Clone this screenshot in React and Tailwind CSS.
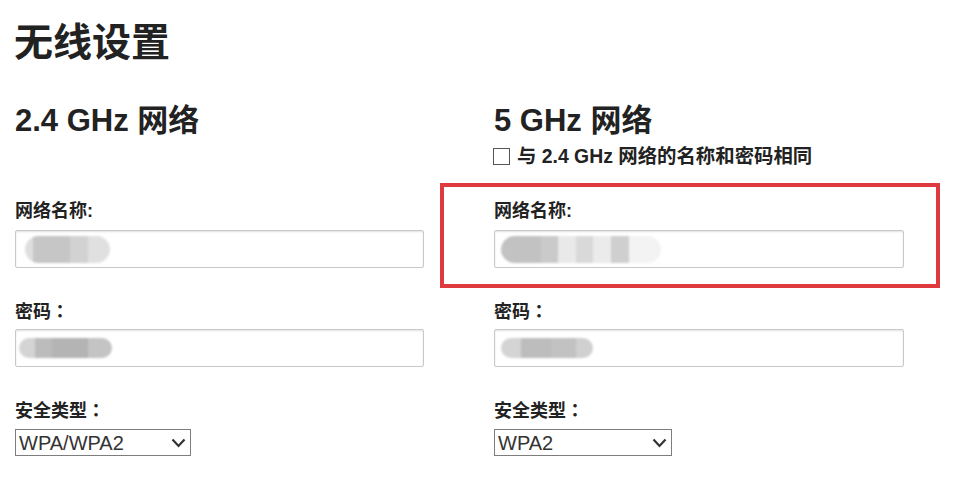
import React from "react";

const blobs = {
  name24: { pad: "pl-[9px]", h: "h-[27px]", parts: [[8, "#dedede"], [37, "#c6c6c6"], [18, "#d2d2d2"], [22, "#e0e0e0"]] },
  pw24: { pad: "pl-[3px]", h: "h-[20px]", parts: [[16, "#d4d4d4"], [17, "#bcbcbc"], [36, "#b4b4b4"], [24, "#c4c4c4"]] },
  name5: { pad: "pl-[6px]", h: "h-[27px]", parts: [[40, "#c2c2c2"], [17, "#cacaca"], [18, "#e9e9e9"], [17, "#d9d9d9"], [18, "#ebebeb"], [18, "#cfcfcf"], [32, "#f3f3f3"]] },
  pw5: { pad: "pl-[6px]", h: "h-[20px]", parts: [[20, "#d4d4d4"], [30, "#bdbdbd"], [25, "#c2c2c2"], [17, "#d0d0d0"]] },
};

// blurred (hidden) value inside a text box
function Hidden({ kind }) {
  const b = blobs[kind];
  return (
    <div className={`flex h-full items-center ${b.pad}`}>
      <div className={`flex ${b.h} overflow-hidden rounded-full blur-[1px]`}>
        {b.parts.map(([w, c], i) => (
          <div key={i} style={{ width: w, background: c }} />
        ))}
      </div>
    </div>
  );
}

function TextBox({ kind, width }) {
  return (
    <div
      className={`${width} h-[38px] rounded-[2px] border border-[#c9c9c9] bg-white shadow-[inset_0_1px_2px_rgba(0,0,0,0.12)]`}
    >
      <Hidden kind={kind} />
    </div>
  );
}

function Select({ value, width }) {
  return (
    <div
      className={`${width} mt-[8px] flex h-[27px] items-center justify-between border border-[#7d7d7d] bg-white pl-[3px] pr-[4px]`}
    >
      <span className="text-[20px] leading-[20px] text-[#333]">{value}</span>
      <svg width="15" height="10" viewBox="0 0 15 10">
        <polyline points="1.5,1.5 7.5,8 13.5,1.5" fill="none" stroke="#333" strokeWidth="2.2" />
      </svg>
    </div>
  );
}

function Label({ text, colon, className = "" }) {
  return (
    <div className={`text-[18px] leading-[20px] font-bold ${className}`}>
      {text}
      {colon === "wide" ? (
        <span className="font-['Noto_Sans_CJK_TC',sans-serif]">：</span>
      ) : (
        ":"
      )}
    </div>
  );
}

function Column({ band, nameKind, pwKind, security, inputWidth, selectWidth, marked }) {
  return (
    <section className="flex flex-col">
      <div className="h-[96px]">
        <h2 className="text-[31px] leading-[32px] font-bold">{band} 网络</h2>
        {band === "5 GHz" && (
          <label className="mt-[8px] flex h-[22px] items-center gap-[7px]">
            <span className="ml-[-1px] h-[17px] w-[17px] border border-[#555] bg-white" />
            <span className="text-[19.4px] leading-[22px] font-bold">与 2.4 GHz 网络的名称和密码相同</span>
          </label>
        )}
      </div>

      <div className="relative">
        {marked && (
          <div className="pointer-events-none absolute left-[-54px] top-[-18px] h-[105px] w-[500px] border-[4px] border-[#df3b3f]" />
        )}
        <Label text="网络名称" />
        <div className="mt-[9px]">
          <TextBox kind={nameKind} width={inputWidth} />
        </div>
      </div>

      <Label text="密码" colon="wide" className="mt-[32px]" />
      <div className="mt-[7px]">
        <TextBox kind={pwKind} width={inputWidth} />
      </div>

      <Label text="安全类型" colon="wide" className="mt-[32px]" />
      <Select value={security} width={selectWidth} />
    </section>
  );
}

export default function App() {
  return (
    <div className="min-h-[477px] bg-white pl-[15px] pt-[23px] font-['Liberation_Sans','Noto_Sans_CJK_SC',sans-serif] text-[#222]">
      <h1 className="ml-[-1px] text-[39px] leading-[40px] font-bold">无线设置</h1>

      <div className="mt-[42px] flex">
        <div className="w-[479px]">
          <Column
            band="2.4 GHz"
            nameKind="name24"
            pwKind="pw24"
            security="WPA/WPA2"
            inputWidth="w-[409px]"
            selectWidth="w-[176px]"
          />
        </div>
        <div className="w-[450px]">
          <Column
            band="5 GHz"
            nameKind="name5"
            pwKind="pw5"
            security="WPA2"
            inputWidth="w-[410px]"
            selectWidth="w-[178px]"
            marked
          />
        </div>
      </div>
    </div>
  );
}
